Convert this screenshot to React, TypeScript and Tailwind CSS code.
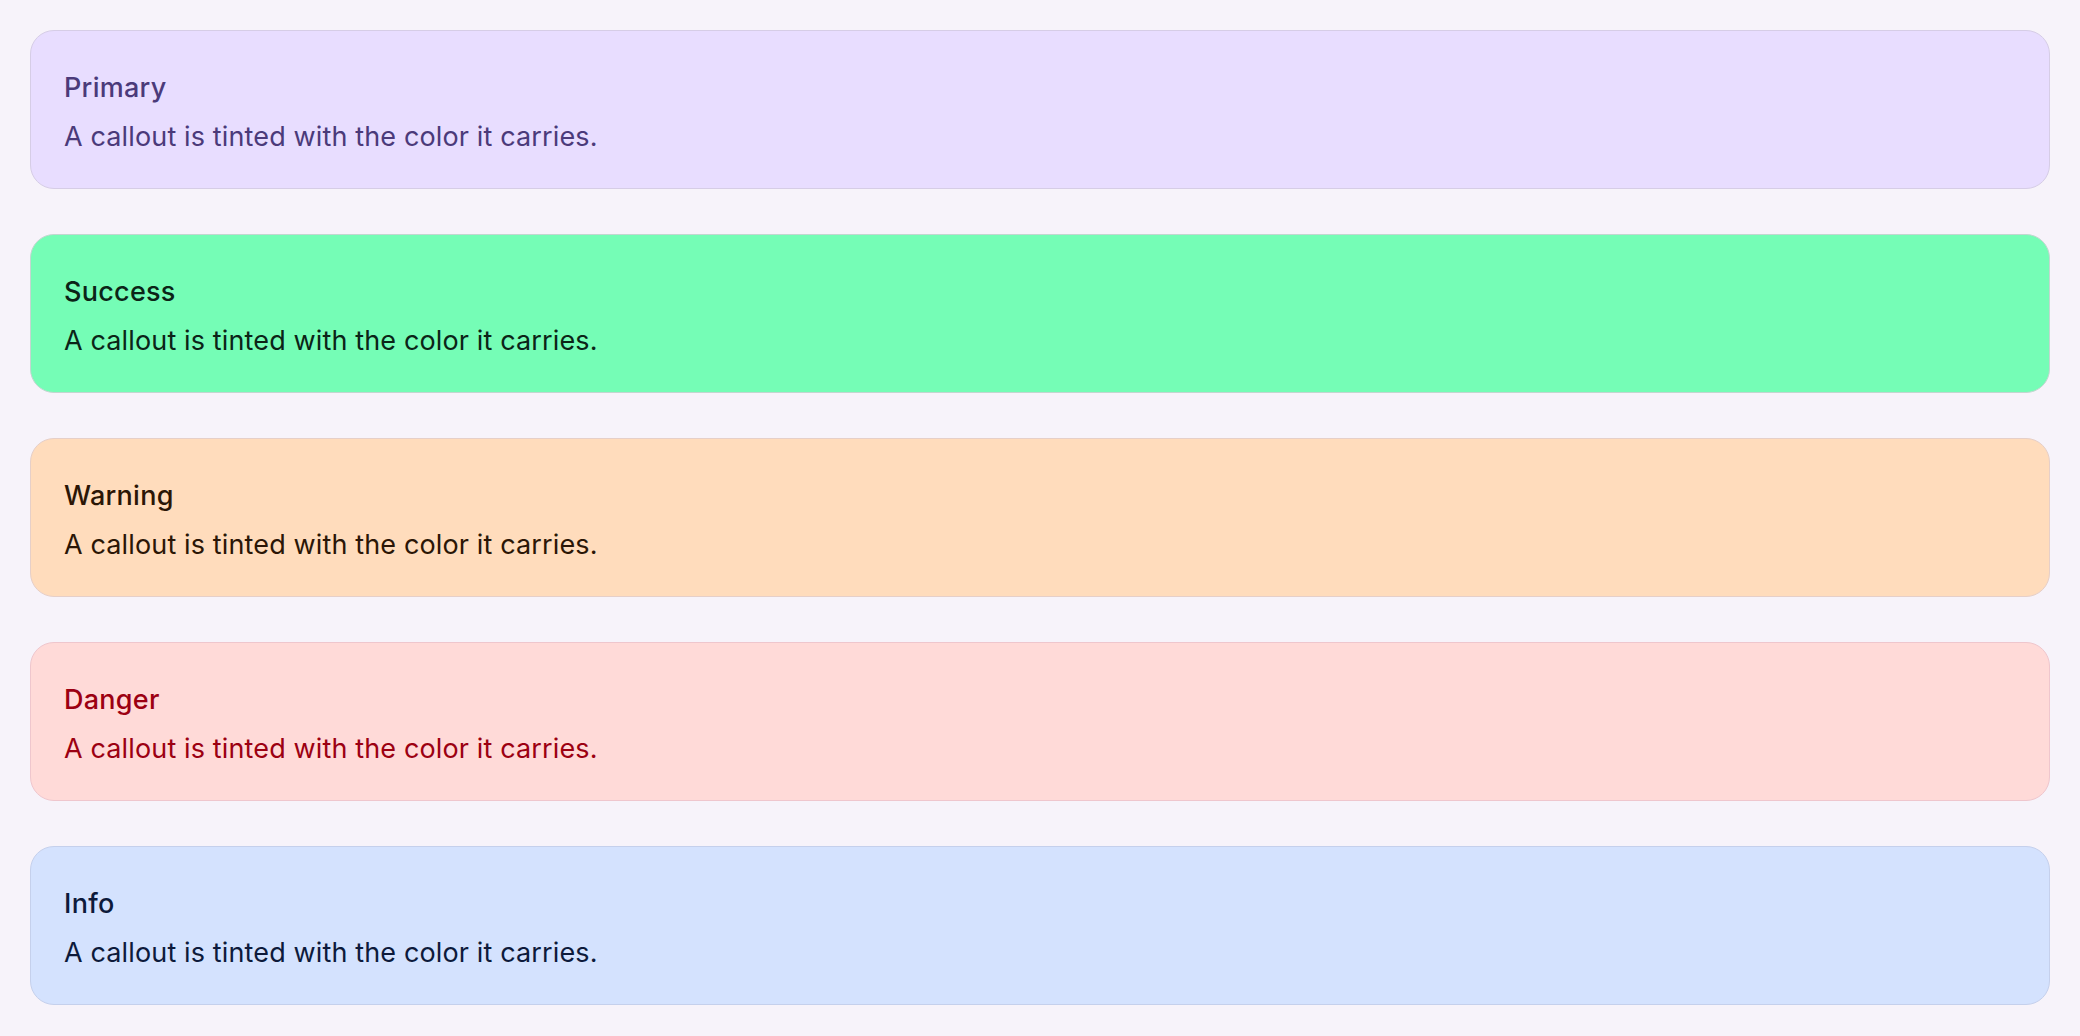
import React from 'react';

interface CalloutProps {
    title: string;
    body: string;
    tone: 'primary' | 'success' | 'warning' | 'danger' | 'info';
}

const toneClasses: Record<CalloutProps['tone'], string> = {
    primary: 'bg-[#e8ddff] border-[#d6cde6] text-[#4b3a7a]',
    success: 'bg-[#75fdb6] border-[#c3d6d0] text-[#0b2417]',
    warning: 'bg-[#ffdcbc] border-[#e6cfc8] text-[#2b1606]',
    danger: 'bg-[#ffdad8] border-[#efc6cd] text-[#9c0012]',
    info: 'bg-[#d4e2fe] border-[#c5d0ec] text-[#0d1a3b]',
};

const Callout: React.FC<CalloutProps> = ({ title, body, tone }) => (
    <div className={`rounded-3xl border pl-[33px] pr-8 pt-[37px] pb-[32px] ${toneClasses[tone]}`}>
        <div className="text-[27px] leading-[39px] tracking-[0.01em] font-medium">{title}</div>
        <p className="mt-[10px] text-[27px] leading-[39px] tracking-[0.005em]">{body}</p>
    </div>
);

const callouts: CalloutProps[] = [
    { tone: 'primary', title: 'Primary', body: 'A callout is tinted with the color it carries.' },
    { tone: 'success', title: 'Success', body: 'A callout is tinted with the color it carries.' },
    { tone: 'warning', title: 'Warning', body: 'A callout is tinted with the color it carries.' },
    { tone: 'danger', title: 'Danger', body: 'A callout is tinted with the color it carries.' },
    { tone: 'info', title: 'Info', body: 'A callout is tinted with the color it carries.' },
];

export default function App() {
    return (
        <div
            className="min-h-screen bg-[#f7f3fa] p-[30px] flex flex-col gap-[45px]"
            style={{ fontFamily: 'Inter, "Noto Sans", sans-serif' }}
        >
            {callouts.map((c) => (
                <Callout key={c.tone} {...c} />
            ))}
        </div>
    );
}
